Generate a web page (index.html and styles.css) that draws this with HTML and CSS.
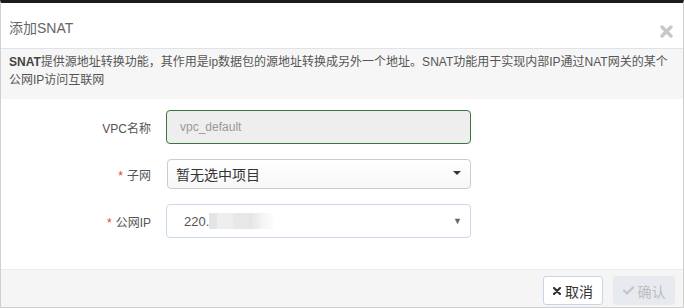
FILE: index.html
```html
<!DOCTYPE html>
<html lang="zh">
<head>
<meta charset="utf-8">
<title>添加SNAT</title>
<link rel="stylesheet" href="styles.css">
</head>
<body>
<div class="modal">
  <div class="modal-header">
    <span class="modal-title">添加SNAT</span>
    <svg class="close" width="13" height="13" viewBox="0 0 13 13"><path d="M2 2 L11 11 M11 2 L2 11" stroke="#c8c8c8" stroke-width="3.4" stroke-linecap="round"/></svg>
  </div>
  <div class="info"><b>SNAT</b>提供源地址转换功能，其作用是ip数据包的源地址转换成另外一个地址。SNAT功能用于实现内部IP通过NAT网关的某个<br>公网IP访问互联网</div>
  <div class="form">
    <div class="row">
      <label class="label">VPC名称</label>
      <div class="field input-disabled">vpc_default</div>
    </div>
    <div class="row">
      <label class="label"><span class="req">*</span>子网</label>
      <div class="field select-btn"><span>暂无选中项目</span><span class="caret"></span></div>
    </div>
    <div class="row">
      <label class="label"><span class="req">*</span>公网IP</label>
      <div class="field select-native"><span class="ip">220.<span class="mask m1"></span><span class="mask m2"></span><span class="mask m3"></span><span class="mask m4"></span></span><span class="tri">▼</span></div>
    </div>
  </div>
  <div class="footer">
    <button class="btn btn-cancel"><svg width="8" height="8" viewBox="0 0 8 8"><path d="M1 1 L7 7 M7 1 L1 7" stroke="#333" stroke-width="2.2" stroke-linecap="round"/></svg>取消</button>
    <button class="btn btn-ok"><svg width="11" height="9" viewBox="0 0 11 9"><path d="M1 4.5 L4 7.5 L10 1.5" fill="none" stroke="#c2c6cc" stroke-width="2.4" stroke-linecap="round" stroke-linejoin="round"/></svg>确认</button>
  </div>
</div>
</body>
</html>
```
FILE: styles.css
```css
* { box-sizing: border-box; }
html, body { margin: 0; padding: 0; background: #fff; }
body {
  font-family: "Liberation Sans", "Noto Sans CJK SC", sans-serif;
  color: #333;
}
.modal {
  width: 684px;
  height: 308px;
  border: 1px solid #cfcfcf;
  border-top: 3px solid #1c1c1c;
  display: flex;
  flex-direction: column;
  overflow: hidden;
}
.modal-header {
  height: 46px;
  border-bottom: 1px solid #dde3ea;
  display: flex;
  align-items: center;
  justify-content: space-between;
  padding: 0 10px 0 8px;
  flex: none;
}
.modal-title {
  font-size: 14px;
  color: #666;
  margin-top: 2px;
}
.close { margin-top: 11px; }
.info {
  background: #f6f6f6;
  font-size: 12px;
  line-height: 18px;
  color: #555;
  padding: 4px 8px 10px;
  height: 50px;
  white-space: nowrap;
  overflow: hidden;
  flex: none;
}
.info b { color: #444; }
.form {
  padding-top: 11px;
  display: flex;
  flex-direction: column;
  gap: 15px;
  flex: none;
}
.row {
  display: flex;
  align-items: center;
}
.label {
  width: 151px;
  text-align: right;
  font-size: 12px;
  color: #555;
  padding-right: 1px;
  margin-right: 14px;
}
.req { color: #e0403a; margin-right: 4px; }
.field {
  width: 305px;
  border-radius: 4px;
  display: flex;
  align-items: center;
}
.input-disabled {
  height: 34px;
  background: #eee;
  border: 1px solid #3c763d;
  color: #999;
  font-size: 12px;
  padding-left: 13px;
}
.select-btn {
  height: 30px;
  margin-left: 1px;
  width: 304px;
  border: 1px solid #ccc;
  background: linear-gradient(#fff, #f7f7f7);
  font-size: 14px;
  color: #333;
  padding: 0 9px 0 8px;
  justify-content: space-between;
}
.caret {
  width: 0;
  height: 0;
  border-left: 4px solid transparent;
  border-right: 4px solid transparent;
  border-top: 4px solid #333;
  margin-top: -2px;
}
.select-native {
  height: 34px;
  border: 1px solid #cbd9e8;
  background: #fff;
  font-size: 13px;
  color: #555;
  padding: 0 8px 0 17px;
  justify-content: space-between;
}
.ip { display: flex; align-items: center; }
.mask { display: inline-block; height: 16px; }
.m1 { width: 8px; background: #e4e4e4; }
.m2 { width: 16px; background: #eeeeee; }
.m3 { width: 16px; background: #e8e8e8; }
.m4 { width: 24px; background: linear-gradient(90deg, #e2e2e2, #f6f6f6 60%, #fcfcfc); }
.tri { font-size: 9px; color: #666; }
.footer {
  margin-top: auto;
  height: 38px;
  background: #f5f5f5;
  border-top: 1px solid #ececec;
  display: flex;
  justify-content: flex-end;
  align-items: flex-start;
  gap: 10px;
  padding: 6px 8px 0 0;
  flex: none;
}
.btn {
  height: 29px;
  border-radius: 3px;
  font-family: "Liberation Sans", "Noto Sans CJK SC", sans-serif;
  font-size: 14px;
  display: flex;
  align-items: center;
  justify-content: center;
  gap: 4px;
  padding: 0;
}
.btn-cancel {
  width: 60px;
  background: #fff;
  border: 1px solid #c6d6e6;
  color: #333;
}
.btn-ok {
  width: 62px;
  background: #e7eaee;
  border: 1px solid #e7eaee;
  color: #bdbdbd;
}
```
